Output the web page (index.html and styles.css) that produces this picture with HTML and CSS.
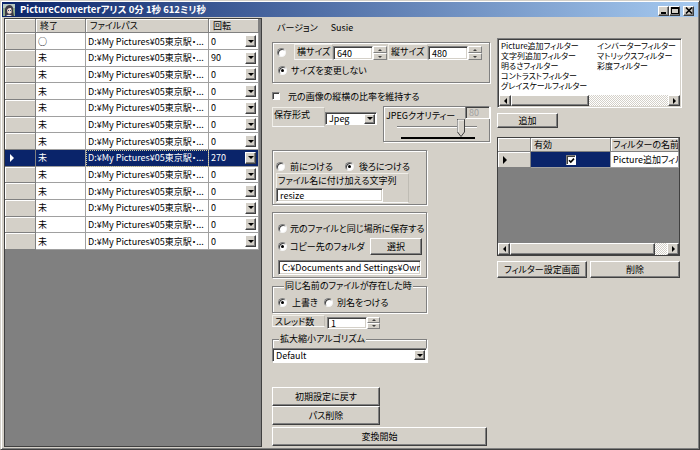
FILE: index.html
```html
<!DOCTYPE html>
<html lang="ja">
<head>
<meta charset="utf-8">
<title>PictureConverter</title>
<link rel="stylesheet" href="styles.css">
</head>
<body>
<div class="window">
  <div class="titlebar">
    <svg class="appicon" viewBox="0 0 12 12" width="12" height="12">
      <rect x="0" y="0" width="12" height="12" fill="#8fa88a"/>
      <rect x="0" y="0" width="12" height="4" fill="#b8c8c0"/>
      <path d="M2 12 L2 5 Q3 1 7 1 Q11 2 10 7 L11 12 Z" fill="#3c3a48"/>
      <path d="M4 6 Q5 3.5 8 4 Q9 6 8.5 9 Q6.5 10.5 4.5 9 Z" fill="#f2dccf"/>
      <rect x="5" y="6" width="1" height="1" fill="#2a4a7a"/>
      <rect x="7" y="6" width="1" height="1" fill="#2a4a7a"/>
      <path d="M3 12 Q6 9.5 9 12 Z" fill="#e8e8f0"/>
    </svg>
    <span class="title">PictureConverterアリス 0分 1秒 612ミリ秒</span>
    <div class="capbtns">
      <span class="capbtn"><svg width="8" height="7" viewBox="0 0 8 7"><rect x="1" y="5" width="5" height="2" fill="#000"/></svg></span>
      <span class="capbtn"><svg width="8" height="7" viewBox="0 0 8 7"><rect x="0.5" y="0.5" width="7" height="6" fill="none" stroke="#000"/><rect x="0" y="0" width="8" height="2" fill="#000"/></svg></span>
      <span class="capbtn close"><svg width="8" height="7" viewBox="0 0 8 7"><path d="M1 0.5 L7 6.5 M7 0.5 L1 6.5" stroke="#000" stroke-width="1.6" fill="none"/></svg></span>
    </div>
  </div>

  <div class="main">
    <!-- left data grid -->
    <div class="dgv">
      <div class="row hdr">
        <div class="cell rh"></div>
        <div class="cell c1">終了</div>
        <div class="cell c2">ファイルパス</div>
        <div class="cell c3">回転</div>
      </div>
      <div class="row"><div class="cell rh"></div><div class="cell c1">○</div><div class="cell c2">D:¥My Pictures¥05東京駅・...</div><div class="cell c3"><span>0</span><span class="dd"><i class="tri-d"></i></span></div></div>
      <div class="row"><div class="cell rh"></div><div class="cell c1">未</div><div class="cell c2">D:¥My Pictures¥05東京駅・...</div><div class="cell c3"><span>90</span><span class="dd"><i class="tri-d"></i></span></div></div>
      <div class="row"><div class="cell rh"></div><div class="cell c1">未</div><div class="cell c2">D:¥My Pictures¥05東京駅・...</div><div class="cell c3"><span>0</span><span class="dd"><i class="tri-d"></i></span></div></div>
      <div class="row"><div class="cell rh"></div><div class="cell c1">未</div><div class="cell c2">D:¥My Pictures¥05東京駅・...</div><div class="cell c3"><span>0</span><span class="dd"><i class="tri-d"></i></span></div></div>
      <div class="row"><div class="cell rh"></div><div class="cell c1">未</div><div class="cell c2">D:¥My Pictures¥05東京駅・...</div><div class="cell c3"><span>0</span><span class="dd"><i class="tri-d"></i></span></div></div>
      <div class="row"><div class="cell rh"></div><div class="cell c1">未</div><div class="cell c2">D:¥My Pictures¥05東京駅・...</div><div class="cell c3"><span>0</span><span class="dd"><i class="tri-d"></i></span></div></div>
      <div class="row"><div class="cell rh"></div><div class="cell c1">未</div><div class="cell c2">D:¥My Pictures¥05東京駅・...</div><div class="cell c3"><span>0</span><span class="dd"><i class="tri-d"></i></span></div></div>
      <div class="row sel"><div class="cell rh"><i class="tri-r white"></i></div><div class="cell c1">未</div><div class="cell c2">D:¥My Pictures¥05東京駅・...</div><div class="cell c3"><span>270</span><span class="dd"><i class="tri-d"></i></span></div></div>
      <div class="row"><div class="cell rh"></div><div class="cell c1">未</div><div class="cell c2">D:¥My Pictures¥05東京駅・...</div><div class="cell c3"><span>0</span><span class="dd"><i class="tri-d"></i></span></div></div>
      <div class="row"><div class="cell rh"></div><div class="cell c1">未</div><div class="cell c2">D:¥My Pictures¥05東京駅・...</div><div class="cell c3"><span>0</span><span class="dd"><i class="tri-d"></i></span></div></div>
      <div class="row"><div class="cell rh"></div><div class="cell c1">未</div><div class="cell c2">D:¥My Pictures¥05東京駅・...</div><div class="cell c3"><span>0</span><span class="dd"><i class="tri-d"></i></span></div></div>
      <div class="row"><div class="cell rh"></div><div class="cell c1">未</div><div class="cell c2">D:¥My Pictures¥05東京駅・...</div><div class="cell c3"><span>0</span><span class="dd"><i class="tri-d"></i></span></div></div>
      <div class="row"><div class="cell rh"></div><div class="cell c1">未</div><div class="cell c2">D:¥My Pictures¥05東京駅・...</div><div class="cell c3"><span>0</span><span class="dd"><i class="tri-d"></i></span></div></div>
    </div>

    <!-- middle settings panel -->
    <div class="mid">
      <div class="menu"><span>バージョン</span><span>Susie</span></div>

      <div class="etched g1">
        <div class="g1row1">
          <span class="radio"></span>
          <div class="lblpanel w39">横サイズ</div>
          <div class="tb num w40">640</div>
          <div class="spin"><span><i class="tri-u sm"></i></span><span><i class="tri-d sm"></i></span></div>
          <div class="lblpanel w40 ml1">縦サイズ</div>
          <div class="tb num w40">480</div>
          <div class="spin"><span><i class="tri-u sm"></i></span><span><i class="tri-d sm"></i></span></div>
        </div>
        <div class="g1row2"><span class="radio on"></span><span class="rtext">サイズを変更しない</span></div>
      </div>

      <div class="chkrow"><span class="chk"></span><span class="ctext">元の画像の縦横の比率を維持する</span></div>

      <div class="fmtrow">
        <div class="lblpanel fmtlbl">保存形式</div>
        <div class="combo jpeg"><span class="ctxt">Jpeg</span><span class="dd"><i class="tri-d"></i></span></div>
        <div class="etched jq">
          <div class="jqtop"><span class="jqtitle">JPEGクオリティー</span><span class="tb dis">80</span></div>
          <div class="slider">
            <div class="track"></div>
            <svg class="thumb" width="8" height="18" viewBox="0 0 8 18"><path d="M0.5 0.5 H7.5 V13 L4 17.5 L0.5 13 Z" fill="#D4D0C8" stroke="#404040"/><path d="M1 1 H7 M1 1 V13" stroke="#fff"/></svg>
            <div class="ticks"></div>
          </div>
        </div>
      </div>

      <div class="etched g2">
        <div class="g2row">
          <span class="radio"></span><span class="rtext t5">前につける</span>
          <span class="radio on ml-r2"></span><span class="rtext t5">後ろにつける</span>
        </div>
        <div class="lblpanel suffix">
          <span class="stitle">ファイル名に付け加える文字列</span>
          <div class="tb resize">resize</div>
        </div>
      </div>

      <div class="etched g3">
        <div class="g3row1"><span class="radio"></span><span class="rtext t3">元のファイルと同じ場所に保存する</span></div>
        <div class="g3row2"><span class="radio on"></span><span class="rtext t3">コピー先のフォルダ</span><span class="btn sel-btn">選択</span></div>
        <div class="tb folder">C:¥Documents and Settings¥Owne</div>
      </div>

      <fieldset class="fs g4">
        <legend>同じ名前のファイルが存在した時</legend>
        <div class="g4row"><span class="radio on"></span><span class="rtext t5">上書き</span><span class="radio r2"></span><span class="rtext t4">別名をつける</span></div>
      </fieldset>

      <div class="thrrow">
        <div class="lblpanel thrlbl">スレッド数</div>
        <div class="tb num thr">1</div>
        <div class="spin s13"><span><i class="tri-u sm"></i></span><span><i class="tri-d sm"></i></span></div>
      </div>

      <fieldset class="fs g5">
        <legend>拡大縮小アルゴリズム</legend>
        <div class="combo algo"><span class="ctxt">Default</span><span class="dd"><i class="tri-d"></i></span></div>
      </fieldset>

      <span class="btn b-reset">初期設定に戻す</span>
      <span class="btn b-path">パス削除</span>
      <span class="btn b-conv">変換開始</span>
    </div>

    <!-- right filter panel -->
    <div class="right">
      <div class="listbox">
        <div class="items">
          <span>Picture追加フィルター</span>
          <span>文字列追加フィルター</span>
          <span>明るさフィルター</span>
          <span>コントラストフィルター</span>
          <span>グレイスケールフィルター</span>
          <span>インバーターフィルター</span>
          <span>マトリックスフィルター</span>
          <span>彩度フィルター</span>
        </div>
        <div class="hscroll">
          <span class="sbtn"><i class="tri-l"></i></span>
          <span class="sthumb lb-thumb"></span>
          <span class="strack"></span>
          <span class="sbtn"><i class="tri-r"></i></span>
        </div>
      </div>

      <span class="btn b-add">追加</span>

      <div class="fgrid">
        <div class="frow fhdr">
          <div class="fc frh"></div>
          <div class="fc fen">有効</div>
          <div class="fc fnm">フィルターの名前</div>
        </div>
        <div class="frow fdata">
          <div class="fc frh"><i class="tri-r"></i></div>
          <div class="fc fen on"><span class="chk checked"><svg width="7" height="7" viewBox="0 0 7 7"><path d="M1 3.2 L2.8 5 L6 1.6" stroke="#000" stroke-width="1.6" fill="none"/></svg></span></div>
          <div class="fc fnm">Picture追加フィル</div>
        </div>
        <div class="fspacer"></div>
        <div class="hscroll fscroll">
          <span class="sbtn"><i class="tri-l"></i></span>
          <span class="sthumb fg-thumb"></span>
          <span class="strack"></span>
          <span class="sbtn"><i class="tri-r"></i></span>
        </div>
      </div>

      <div class="fbtns">
        <span class="btn b-fset">フィルター設定画面</span>
        <span class="btn b-del">削除</span>
      </div>
    </div>
  </div>
</div>
</body>
</html>
```

FILE: styles.css
```css
* { box-sizing: border-box; }
html, body { margin: 0; padding: 0; }
body {
  width: 700px; height: 450px; overflow: hidden;
  background: #D4D0C8;
  font-family: "Noto Sans CJK JP", "Noto Sans", sans-serif;
  font-size: 9px; line-height: 1; color: #000;
  font-feature-settings: "palt";
}
i { display: inline-block; font-style: normal; }

/* window frame */
.window {
  width: 700px; height: 450px;
  border: 1px solid; border-color: #D4D0C8 #404040 #404040 #D4D0C8;
  box-shadow: inset 1px 1px #fff, inset -1px -1px #808080;
  padding: 1px;
  display: flex; flex-direction: column;
}
.titlebar {
  height: 15px; flex: none;
  display: flex; align-items: center;
  background: linear-gradient(to right, #0A246A, #A6CAF0);
  padding: 0 4px 0 1px;
}
.appicon { flex: none; }
.title { margin-left: 5px; color: #fff; font-weight: bold; font-size: 9.5px; white-space: nowrap; }
.capbtns { margin-left: auto; display: flex; margin-top: 2px; }
.capbtn {
  width: 11px; height: 10px; background: #D4D0C8;
  border: 1px solid; border-color: #fff #404040 #404040 #fff;
  box-shadow: inset -1px -1px #808080;
  display: flex; align-items: center; justify-content: center;
}
.capbtn svg { display: block; }
.capbtn.close { margin-left: 3px; }

.main { flex: 1; display: flex; margin-top: 1px; min-height: 0; }

/* triangles */
.tri-d { width: 0; height: 0; border-left: 3px solid transparent; border-right: 3px solid transparent; border-top: 3px solid #000; }
.tri-u { width: 0; height: 0; border-left: 3px solid transparent; border-right: 3px solid transparent; border-bottom: 3px solid #000; }
.tri-d.sm { border-left-width: 2px; border-right-width: 2px; border-top-width: 2px; border-top-color: #404040; }
.tri-u.sm { border-left-width: 2px; border-right-width: 2px; border-bottom-width: 2px; border-bottom-color: #404040; }
.tri-l { width: 0; height: 0; border-top: 3px solid transparent; border-bottom: 3px solid transparent; border-right: 3px solid #000; }
.tri-r { width: 0; height: 0; border-top: 4px solid transparent; border-bottom: 4px solid transparent; border-left: 4px solid #000; }
.tri-r.white { border-left-color: #fff; }

/* common controls */
.btn {
  display: flex; align-items: center; justify-content: center;
  background: #D4D0C8;
  border: 1px solid; border-color: #fff #404040 #404040 #fff;
  box-shadow: inset -1px -1px #808080;
  white-space: nowrap;
}
.tb {
  display: flex; align-items: center;
  background: #fff; padding-left: 3px; white-space: nowrap; overflow: hidden;
  border: 1px solid; border-color: #808080 #fff #fff #808080;
  box-shadow: inset 1px 1px #404040, inset -1px -1px #D4D0C8;
}
.tb.dis { background: #D4D0C8; color: #a0a0a0; }
.dd {
  width: 11px; height: 12px; flex: none;
  display: flex; align-items: center; justify-content: center;
  background: #D4D0C8;
  border: 1px solid; border-color: #fff #404040 #404040 #fff;
  box-shadow: inset -1px -1px #808080;
}
.combo {
  display: flex; align-items: center; justify-content: space-between;
  background: #fff; padding: 0 1px 0 3px;
  border: 1px solid; border-color: #808080 #fff #fff #808080;
  box-shadow: inset 1px 1px #404040;
}
.combo .dd { height: 10px; width: 11px; }
.radio {
  width: 9px; height: 9px; flex: none; border-radius: 50%;
  background: #fff; position: relative;
  border: 1px solid; border-color: #808080 #f4f4f4 #f4f4f4 #808080;
  box-shadow: inset 1px 1px #404040;
}
.radio.on::after {
  content: ""; position: absolute; left: 2px; top: 2px;
  width: 3px; height: 3px; border-radius: 50%; background: #000;
}
.chk {
  width: 8px; height: 8px; flex: none; background: #fff;
  border: 1px solid; border-color: #808080 #fff #fff #808080;
  box-shadow: inset 1px 1px #404040;
}
.chk.checked {
  width: 10px; height: 10px;
  display: flex; align-items: center; justify-content: center;
}
.chk.checked svg { display: block; margin: 1px 0 0 1px; }
.spin { width: 14px; height: 14px; flex: none; display: flex; flex-direction: column; }
.spin span {
  flex: 1; display: flex; align-items: center; justify-content: center;
  background: #D4D0C8;
  border: 1px solid; border-color: #fff #808080 #808080 #fff;
}
.lblpanel {
  align-self: stretch;
  border: 1px solid; border-color: #f0eee8 #bfbcb4 #f8f8f8 #f0eee8;
  padding: 2px 2px 0 2px; white-space: nowrap;
}
.etched { border: 1px solid #808080; box-shadow: inset 1px 1px #fff, 1px 1px #fff; }
.rtext { white-space: nowrap; margin-left: 4px; }
.rtext.t5 { margin-left: 5px; }
.rtext.t4 { margin-left: 4px; }
.rtext.t3 { margin-left: 3px; }

/* left data grid */
.dgv {
  flex: none; margin-left: 2px; width: 258px; height: 429px;
  border: 1px solid #404040; background: #808080; overflow: hidden;
}
.dgv .row { display: flex; height: 16.67px; }
.dgv .row.hdr { height: 14.33px; }
.cell {
  display: flex; align-items: center; overflow: hidden; white-space: nowrap;
  background: #fff; padding-left: 2px;
  border-right: 1px solid #A0A0A0; border-bottom: 1px solid #A0A0A0;
}
.cell.rh { width: 31px; background: #D4D0C8; border-color: #808080; box-shadow: inset 1px 1px #fff; padding-left: 5px; }
.cell.c1 { width: 50px; }
.cell.c2 { width: 123px; }
.cell.c3 { width: 50px; justify-content: space-between; padding-right: 2px; }
.hdr .cell { background: #D4D0C8; border-color: #808080; box-shadow: inset 1px 1px #fff; padding-left: 4px; }
.sel .cell { background: #0A246A; color: #fff; }
.sel .cell.rh { box-shadow: none; }
.sel .cell.c2 { outline: 1px dotted #d8d0a0; outline-offset: -1px; }

/* middle panel */
.mid { flex: none; width: 222px; margin-left: 6px; padding-left: 4px; display: flex; flex-direction: column; }
.menu { height: 18px; display: flex; align-items: center; padding-left: 5px; gap: 13px; }
.g1 { margin-top: 6px; width: 218px; height: 41px; padding: 1px 0 0 4px; }
.g1row1 { display: flex; align-items: center; height: 16px; }
.g1row1 .lblpanel { margin-left: 8px; }
.g1row1 .tb { height: 14px; margin-top: 2px; align-self: center; }
.g1row1 .spin { margin-top: 2px; }
.w39 { width: 39px; }
.w40 { width: 40px; }
.ml1 { margin-left: 1px !important; }
.g1row2 { display: flex; align-items: center; height: 21px; padding-left: 1px; }
.chkrow { margin-top: 8px; height: 10px; display: flex; align-items: center; }
.ctext { margin-left: 8px; white-space: nowrap; }

.fmtrow { margin-top: 5px; height: 36px; display: flex; align-items: flex-start; }
.fmtlbl { width: 53px; height: 20px; margin-top: 1px; align-self: flex-start; padding-left: 1px; }
.combo.jpeg { width: 52px; height: 13px; margin-top: 6px; }
.jq { margin-left: 6px; width: 107px; height: 36px; display: flex; flex-direction: column; }
.jqtop { display: flex; justify-content: space-between; align-items: flex-start; padding-left: 2px; }
.jqtitle { margin-top: 4px; white-space: nowrap; }
.tb.dis { width: 25px; height: 13px; margin: -1px -1px 0 0; }
.slider { position: relative; height: 22px; }
.track {
  position: absolute; left: 13px; top: 6px; width: 80px; height: 2px;
  border-top: 1px solid #808080; border-bottom: 1px solid #fff;
}
.thumb { position: absolute; left: 73px; top: -1px; }
.ticks { position: absolute; left: 17px; top: 17px; width: 74px; height: 2px; background: #000; }

.g2 { margin-top: 8px; width: 155px; height: 55px; padding: 9px 0 0 3px; }
.g2row { display: flex; align-items: center; height: 12px; }
.ml-r2 { margin-left: 12px; }
.suffix { margin-top: 1px; width: 133px; height: 30px; display: flex; flex-direction: column; padding: 0; }
.stitle { padding: 2px 2px 0 1px; height: 14px; }
.tb.resize { width: 107px; height: 14px; margin-left: -1px; }

.g3 { margin-top: 7px; width: 155px; height: 66px; padding: 9px 4px 0 5px; }
.g3row1 { display: flex; align-items: center; height: 12px; }
.g3row2 { display: flex; align-items: center; height: 17px; margin-top: 4px; }
.sel-btn { margin-left: auto; width: 52px; height: 17px; }
.tb.folder { margin-top: 5px; width: 143px; height: 15px; }

.fs {
  margin: 2px 0 0 0; width: 155px; min-width: 0;
  border: 1px solid #808080; box-shadow: inset 1px 1px #fff, 1px 1px #fff;
}
.fs legend { height: 12px; line-height: 12px; padding: 0 1px; margin-left: 6px; background: #D4D0C8; white-space: nowrap; }
.g4 { padding: 3px 0 3px 5px; }
.g4row { display: flex; align-items: center; height: 14px; }
.radio.r2 { margin-left: 6px; }

.thrrow { margin-top: 2px; height: 14px; display: flex; align-items: flex-start; }
.thrlbl { width: 53px; height: 12px; align-self: flex-start; padding-top: 1px; }
.tb.thr { margin-left: 2px; margin-top: 2px; width: 40px; height: 12px; }
.spin.s13 { margin-top: 2px; height: 12px; width: 13px; }

.g5 { margin-top: 4px; padding: 3px 0 0 0; }
.combo.algo { margin: 0 -1px -1px -1px; height: 14px; }

.b-reset { margin-top: 25px; width: 108px; height: 19px; }
.b-path { width: 108px; height: 19px; }
.b-conv { margin-top: 2px; width: 215px; height: 19px; }

/* right panel */
.right { flex: 1; padding-left: 7px; display: flex; flex-direction: column; }
.listbox {
  margin-top: 20px; width: 185px; height: 70px; background: #fff;
  border: 1px solid; border-color: #808080 #fff #fff #808080;
  box-shadow: inset 1px 1px #404040, inset -1px -1px #D4D0C8;
  padding: 1px; display: flex; flex-direction: column;
}
.items {
  flex: 1; display: grid; grid-auto-flow: column;
  grid-template-rows: repeat(5, 10px); grid-template-columns: 96px 84px;
  padding: 1px 0 0 2px; line-height: 10px; font-size: 8px; white-space: nowrap; overflow: hidden;
}
.hscroll { height: 11px; display: flex; flex: none; }
.sbtn {
  width: 12px; flex: none; display: flex; align-items: center; justify-content: center;
  background: #D4D0C8;
  border: 1px solid; border-color: #fff #404040 #404040 #fff;
  box-shadow: inset -1px -1px #808080;
}
.sbtn .tri-r { border-top-width: 3px; border-bottom-width: 3px; border-left-width: 3px; }
.sthumb {
  flex: none; background: #D4D0C8;
  border: 1px solid; border-color: #fff #404040 #404040 #fff;
  box-shadow: inset -1px -1px #808080;
}
.strack { flex: 1; background: repeating-conic-gradient(#fff 0 25%, #D4D0C8 0 50%) 0 0 / 2px 2px; }
.lb-thumb { width: 78px; }

.b-add { margin-top: 5px; width: 61px; height: 15px; }

.fgrid {
  margin-top: 9px; width: 183px; height: 119px; background: #808080;
  border: 1px solid #404040; display: flex; flex-direction: column; overflow: hidden;
}
.frow { display: flex; flex: none; }
.fhdr { height: 14px; }
.fdata { height: 16px; }
.fc { display: flex; align-items: center; white-space: nowrap; overflow: hidden; border-right: 1px solid #A0A0A0; border-bottom: 1px solid #A0A0A0; background: #fff; padding-left: 3px; }
.fhdr .fc { background: #D4D0C8; border-color: #808080; box-shadow: inset 1px 1px #fff; }
.frh { width: 33px; background: #D4D0C8; border-color: #808080; box-shadow: inset 1px 1px #fff; padding-left: 5px; }
.fen { width: 80px; }
.fen.on { background: #0A246A; justify-content: center; padding-left: 0; }
.fnm { width: 68px; padding-left: 2px; }
.fspacer { flex: 1; }
.fscroll { height: 12px; }
.fg-thumb { width: 145px; }

.fbtns { margin-top: 5px; display: flex; gap: 3px; }
.b-fset, .b-del { width: 90px; height: 17px; }
```
